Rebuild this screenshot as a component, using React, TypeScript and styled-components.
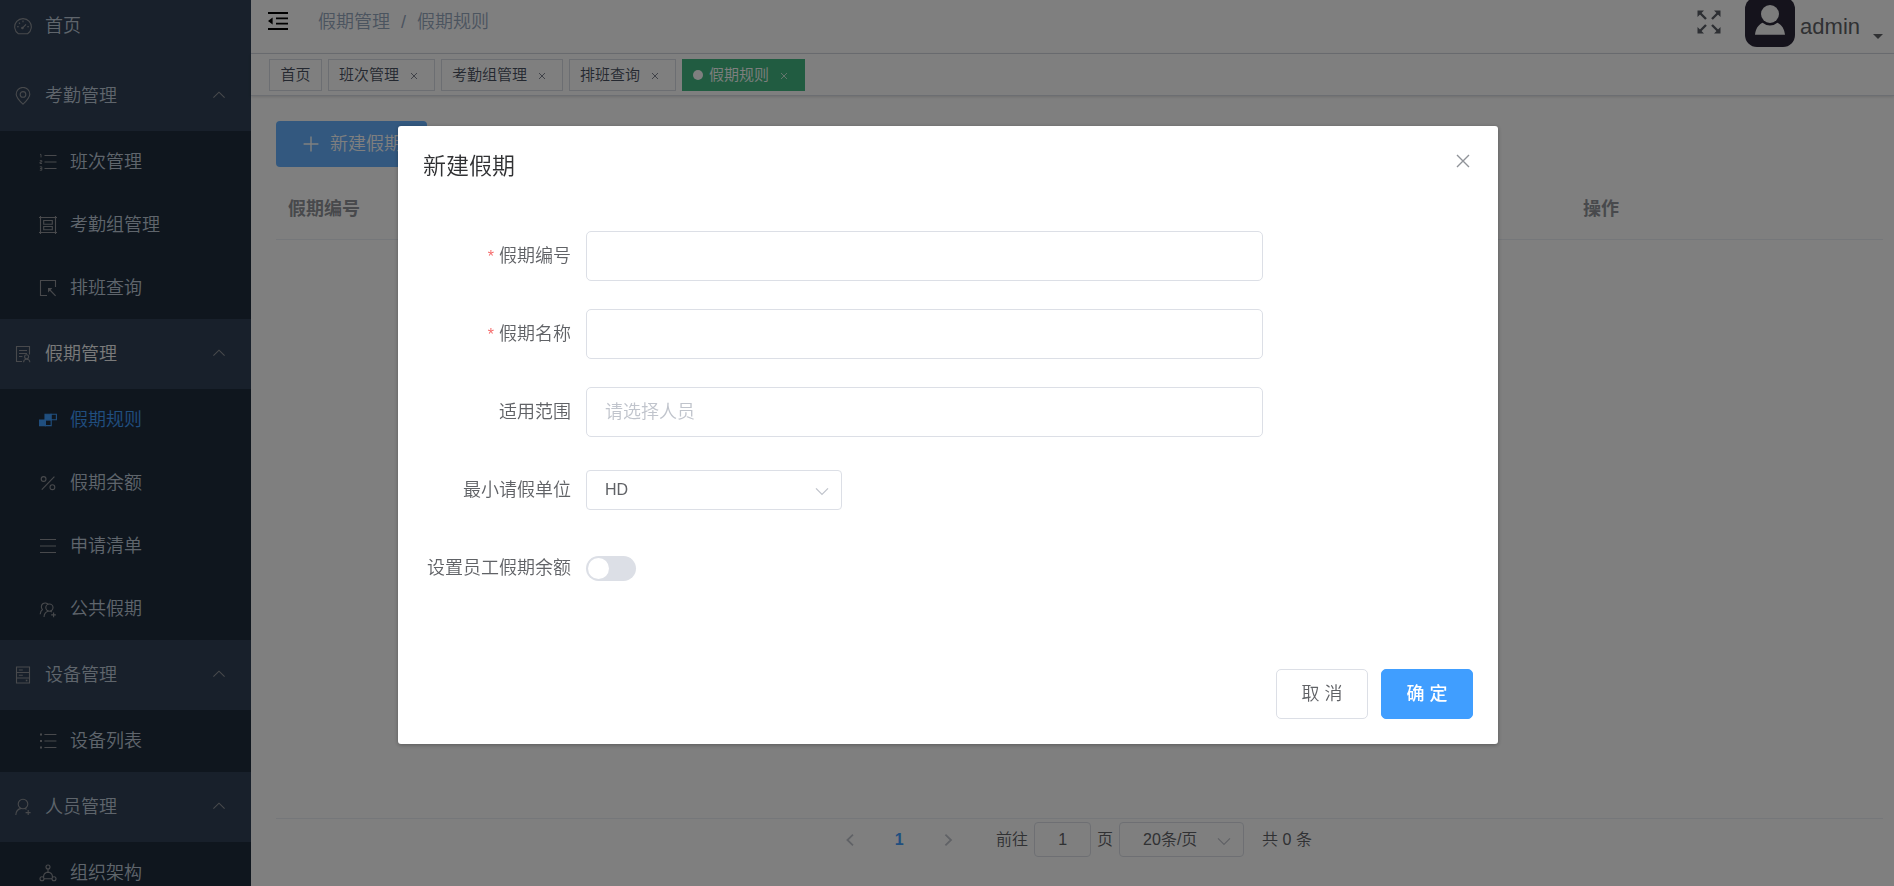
import React, { ReactNode } from 'react';
import styled, { createGlobalStyle } from 'styled-components';

const GlobalStyle = createGlobalStyle`
  *, *::before, *::after { box-sizing: border-box; }
  body {
    margin: 0;
    overflow: hidden;
    background: #fff;
    color: #606266;
    font-family: "Liberation Sans", "Noto Sans CJK SC", sans-serif;
    font-size: 18px;
    font-weight: 350;
    line-height: 20px;
  }
  button, input, select { font-family: inherit; font-weight: inherit; line-height: inherit; color: inherit; }
  ul { margin: 0; padding: 0; list-style: none; }
  a { color: inherit; text-decoration: none; }
`;

/* ---------- icons ---------- */

const Svg = styled.svg<{ $size?: number }>`
  width: ${p => p.$size ?? 18}px;
  height: ${p => p.$size ?? 18}px;
  flex: none;
  display: block;
  fill: none;
  stroke: currentColor;
  stroke-width: 1.1;
`;

const Icon = ({ children, size }: { children: ReactNode; size?: number }) => (
  <Svg viewBox="0 0 18 18" $size={size} aria-hidden="true">{children}</Svg>
);

const icons = {
  dashboard: (
    <Icon>
      <path d="M4.4 16.8A8.3 8.3 0 1 1 13.6 16.8Z" />
      <path d="M8.4 11.2 12 7.4M9 3.6v1.6M3 9.8h1.8M13.2 9.8H15M4.9 5.7l1.1 1.1" />
      <circle cx="8.4" cy="11" r=".7" />
    </Icon>
  ),
  location: (
    <Icon>
      <path d="M9 17.2C5 13.4 2.2 10.4 2.2 7.2a6.8 6.8 0 0 1 13.6 0c0 3.2-2.8 6.2-6.8 10Z" />
      <circle cx="9" cy="7.4" r="2.8" />
    </Icon>
  ),
  ordered: (
    <Icon>
      <path d="M5.5 2.5h12M5.5 9h12M5.5 15.5h12" />
      <path d="M1 1.4h1v3M.8 7.6h2v1.4H1v1.5h2M.8 13.8h2v3.4h-2M1 15.5h1.8" strokeWidth=".9" />
    </Icon>
  ),
  group: (
    <Icon>
      <path d="M1.5 1.5h15v15h-15Z" />
      <path d="M4.7 4.5h8.6v3.8H4.7ZM4.7 10.5h8.6v3.2H4.7Z" />
      <path d="M0 1.5h3M1.5 0v3M15 1.5h3M16.5 0v3M0 16.5h3M1.5 15v3M15 16.5h3M16.5 15v3" />
    </Icon>
  ),
  pointer: (
    <Icon>
      <path d="M8 16.5H1.5v-15h15V8" />
      <path d="M10.5 10.5 16.6 16.8" />
      <path d="M9 9h4.4L9 13.4Z" fill="currentColor" stroke="none" />
    </Icon>
  ),
  document: (
    <Icon>
      <path d="M8 16.5H2.5v-15h13v8" />
      <path d="M5 5.5h8M5 8.5h8M5 11.5h3.4" />
      <circle cx="12.6" cy="11.8" r="2" />
      <path d="M9.6 17.2c0-2 1.2-3 3-3s3.2 1 3.2 3" />
    </Icon>
  ),
  rules: (
    <Icon>
      <path d="M.4 9h6v5.6h-6ZM6 3.2h6v5.6H6Z" fill="currentColor" />
      <path d="M6.4 9h5.8v5.6H6.4ZM12 3.2h5.4v5.6H12Z" />
    </Icon>
  ),
  percent: (
    <Icon>
      <circle cx="4.6" cy="5" r="2.4" />
      <circle cx="13.4" cy="13.2" r="2.4" />
      <path d="M15.4 2.6 2.8 15.6" />
    </Icon>
  ),
  lines: (
    <Icon><path d="M1 2.5h16M1 9h16M1 15.5h16" /></Icon>
  ),
  people: (
    <Icon>
      <path d="M3.2 9.2a3.8 3.8 0 1 1 6-4.8M1.2 14.2c.2-2.2.8-3.8 2.6-5" />
      <circle cx="10.4" cy="7.6" r="3.6" />
      <path d="M5 17c.2-3.4 2-5.4 4.4-5.8M11.4 11.2l1.4.8M14.6 12.6v4.6M12.2 14.9h4.6" />
    </Icon>
  ),
  cabinet: (
    <Icon>
      <path d="M2.5 1h13v16h-13ZM2.5 6.5h13M2.5 12h13M4.8 4h4M4.8 9.2h4" />
      <path d="M11.8 14.5h1.6" strokeWidth="1.6" />
    </Icon>
  ),
  list: (
    <Icon>
      <path d="M5.4 2.5h12M5.4 9h12M5.4 15.5h12" />
      <path d="M1 2.5h2M1 9h2M1 15.5h2" strokeWidth="2" />
    </Icon>
  ),
  person: (
    <Icon>
      <circle cx="9" cy="6" r="4.8" />
      <path d="M1.8 17c.2-3.8 2.4-6 5.4-6.6M10.8 10.4l1.8.9M14.2 12v5M11.6 14.6h5" />
    </Icon>
  ),
  tree: (
    <Icon>
      <circle cx="9" cy="3" r="2" />
      <circle cx="3" cy="14.8" r="2" />
      <circle cx="15" cy="14.8" r="2" />
      <path d="M9 5v3.4M7.4 8.4a4.6 4.6 0 0 0-2.8 4.6M10.6 8.4a4.6 4.6 0 0 1 2.8 4.6M5 14.8h8M7.4 8.4h3.2" />
    </Icon>
  ),
  plus: <Icon><path d="M10 1.6v14.8M2.6 9h14.8" strokeWidth="1.4" /></Icon>,
  up: <Icon><path d="M3.4 10.6 9 5.2l5.6 5.4" /></Icon>,
  down: <Icon><path d="M3 7.4 9 13.4 15 7.4" strokeWidth="1.3" /></Icon>,
  left: <Icon><path d="M12 3.6 6.4 9l5.6 5.4" strokeWidth="1.8" /></Icon>,
  right: <Icon><path d="M6.4 3.6 12 9l-5.6 5.4" strokeWidth="1.8" /></Icon>,
  close: <Icon><path d="M3 3l12 12M15 3 3 15" strokeWidth="1.4" /></Icon>,
};

/* ---------- shell ---------- */

const Shell = styled.div`
  display: flex;
  height: calc(100vh + 9px);
  margin-top: -9px;
`;

const Sidebar = styled.nav`
  width: 251px;
  flex: none;
  overflow: hidden;
  background: #304156;
  color: #bfcbd9;
`;

const GroupButton = styled.button<{ $current?: boolean }>`
  display: flex;
  align-items: center;
  gap: 13px;
  width: 100%;
  height: 70px;
  padding: 0 23px 0 14px;
  border: 0;
  background: none;
  font-size: 18px;
  text-align: left;
  color: ${p => (p.$current ? '#f4f4f5' : '#bfcbd9')};
  svg { color: #909399; }
  span { flex: 1; }
`;

const SubMenu = styled.ul`
  display: flex;
  flex-direction: column;
  gap: 1px;
  background: #1f2d3d;
`;

const SubLink = styled.a<{ $active?: boolean }>`
  display: flex;
  align-items: center;
  gap: 13px;
  height: 62px;
  padding-left: 39px;
  color: ${p => (p.$active ? '#409eff' : '#bfcbd9')};
  svg { color: ${p => (p.$active ? '#409eff' : '#909399')}; }
`;

const Page = styled.div`
  flex: 1;
  min-width: 0;
  display: flex;
  flex-direction: column;
`;

const Navbar = styled.header`
  display: flex;
  align-items: center;
  height: 63px;
  padding: 0 11px 0 17px;
  border-bottom: 1px solid #d8dce5;
`;

const IconButton = styled.button`
  display: flex;
  padding: 0;
  border: 0;
  background: none;
  color: #5a5e66;
`;

const FoldButton = styled(IconButton)`
  margin-right: 30px;
  color: #000;
`;

const Breadcrumb = styled.div`
  display: flex;
  gap: 11px;
  flex: 1;
  color: #97a8be;
`;

const Account = styled.button`
  display: flex;
  align-items: flex-end;
  height: 50px;
  margin-left: 24px;
  padding: 0;
  border: 0;
  background: none;
  font-size: 22px;
  line-height: 40px;
  color: #606266;
`;

const UserName = styled.span`
  margin: 0 13px 0 5px;
`;

const Caret = styled.span`
  margin-bottom: 8px;
  border: 5px solid transparent;
  border-top-color: currentColor;
  border-bottom: 0;
`;

const TagBar = styled.div`
  display: flex;
  gap: 6px;
  height: 42px;
  padding: 5px 18px;
  border-bottom: 1px solid #d8dce5;
  box-shadow: 0 1px 3px rgba(0, 0, 0, 0.12), 0 0 3px rgba(0, 0, 0, 0.04);
`;

const Tag = styled.div<{ $active?: boolean }>`
  display: flex;
  justify-content: center;
  align-items: center;
  min-width: 53px;
  height: 32px;
  padding: 0 10px;
  border: 1px solid ${p => (p.$active ? '#42b983' : '#d8dce5')};
  background: ${p => (p.$active ? '#42b983' : '#fff')};
  color: ${p => (p.$active ? '#fff' : '#495060')};
  font-size: 15px;
`;

const Dot = styled.i`
  width: 10px;
  height: 10px;
  margin-right: 6px;
  border-radius: 50%;
  background: #fff;
`;

const TagClose = styled.button`
  display: flex;
  justify-content: center;
  width: 20px;
  margin-left: 5px;
  padding: 2px 0 0;
  border: 0;
  background: none;
`;

const Content = styled.main`
  flex: 1;
  display: flex;
  flex-direction: column;
  padding: 25px 11px 0 25px;
`;

const CreateButton = styled.button`
  display: flex;
  align-items: center;
  gap: 11px;
  align-self: flex-start;
  height: 46px;
  padding: 0 25px;
  border: 0;
  border-radius: 4px;
  background: #66b1ff;
  color: #fff;
  font-size: 18px;
`;

const TableArea = styled.div`
  flex: 1;
  margin-top: 11px;
  border-bottom: 1px solid #ebeef5;
`;

const Table = styled.table`
  width: 100%;
  border-spacing: 0;
  table-layout: fixed;
  color: #909399;
`;

const HeadCell = styled.th<{ $width?: number }>`
  ${p => (p.$width ? `width: ${p.$width}px;` : '')}
  height: 62px;
  padding: 0 12px;
  border-bottom: 1px solid #ebeef5;
  text-align: left;
  font-weight: 700;
`;

const Pager = styled.div`
  display: flex;
  justify-content: center;
  align-items: center;
  padding: 3px 25px 29px 6px;
  font-size: 16px;
`;

const PageButton = styled.button<{ $current?: boolean }>`
  display: flex;
  justify-content: center;
  align-items: center;
  width: 44px;
  height: 35px;
  margin-right: 5px;
  padding: 0;
  border: 0;
  background: none;
  font-size: 16px;
  font-weight: 700;
  color: ${p => (p.$current ? '#409eff' : '#c0c4cc')};
`;

const JumpLabel = styled.label`
  display: flex;
  align-items: center;
  gap: 6px;
  margin: 0 6px 0 21px;
`;

const JumpInput = styled.input`
  width: 57px;
  height: 35px;
  padding: 0;
  border: 1px solid #dcdfe6;
  border-radius: 4px;
  background: #fff;
  font-size: 16px;
  text-align: center;
`;

/* ---------- form controls ---------- */

const SelectBox = styled.div<{ $width: number }>`
  display: grid;
  align-items: center;
  width: ${p => p.$width}px;
  color: #c0c4cc;
  > * { grid-area: 1 / 1; }
  > svg { justify-self: end; margin-right: 11px; pointer-events: none; }
`;

const Select = styled.select<{ $height: number; $pad: number; $font: number }>`
  appearance: none;
  width: 100%;
  height: ${p => p.$height}px;
  padding: 0 ${p => p.$pad}px;
  border: 1px solid #dcdfe6;
  border-radius: 4px;
  background: #fff;
  color: #606266;
  font-size: ${p => p.$font}px;
`;

const Total = styled.span`
  margin-left: 18px;
`;

const TextInput = styled.input`
  width: 100%;
  height: 50px;
  padding: 0 18px;
  border: 1px solid #dcdfe6;
  border-radius: 5px;
  background: #fff;
  font-size: 18px;
  &::placeholder { color: #c0c4cc; }
`;

const Switch = styled.input`
  appearance: none;
  display: block;
  width: 50px;
  height: 25px;
  margin: 0;
  padding: 2px;
  border-radius: 13px;
  background: #dcdfe6;
  &::before {
    content: '';
    display: block;
    width: 21px;
    height: 21px;
    border-radius: 50%;
    background: #fff;
  }
  &:checked { background: #409eff; }
  &:checked::before { margin-left: auto; }
`;

/* ---------- dialog ---------- */

const Overlay = styled.div`
  position: fixed;
  inset: 0;
  display: flex;
  justify-content: center;
  align-items: flex-start;
  padding: 126px 15px 0 17px;
  overflow: hidden;
  background: rgba(0, 0, 0, 0.5);
`;

const Dialog = styled.section`
  width: 1100px;
  max-width: 100%;
  padding: 25px;
  border-radius: 3px;
  background: #fff;
  box-shadow: 0 1px 4px rgba(0, 0, 0, 0.3);
`;

const DialogHead = styled.header`
  display: flex;
  justify-content: space-between;
  align-items: flex-start;
`;

const DialogTitle = styled.h2`
  margin: 0;
  font-size: 23px;
  line-height: 30px;
  font-weight: inherit;
  color: #303133;
`;

const DialogClose = styled(IconButton)`
  padding: 1px;
  color: #909399;
`;

const Form = styled.form`
  display: flex;
  flex-direction: column;
  gap: 28px;
  padding: 50px 0 76px;
`;

const Field = styled.div`
  display: grid;
  grid-template-columns: 148px minmax(0, 677px);
  column-gap: 15px;
  align-items: center;
  height: 50px;
`;

const FieldLabel = styled.label<{ $required?: boolean }>`
  text-align: right;
  white-space: nowrap;
  ${p => (p.$required ? `&::before { content: '*'; margin-right: 5px; color: #f56c6c; font-size: 16px; }` : '')}
`;

const DialogFoot = styled.footer`
  display: flex;
  justify-content: flex-end;
  gap: 13px;
`;

const DialogButton = styled.button<{ $primary?: boolean }>`
  width: 92px;
  height: 50px;
  padding: 0;
  border: 1px solid ${p => (p.$primary ? '#409eff' : '#dcdfe6')};
  border-radius: 5px;
  background: ${p => (p.$primary ? '#409eff' : '#fff')};
  color: ${p => (p.$primary ? '#fff' : '#606266')};
  font-size: 18px;
  font-weight: ${p => (p.$primary ? 500 : 'inherit')};
`;

/* ---------- data ---------- */

type IconName = keyof typeof icons;
type Group = { title: string; icon: IconName; current?: boolean; items: [string, IconName][] };

const groups: Group[] = [
  { title: '考勤管理', icon: 'location', items: [['班次管理', 'ordered'], ['考勤组管理', 'group'], ['排班查询', 'pointer']] },
  { title: '假期管理', icon: 'document', current: true, items: [['假期规则', 'rules'], ['假期余额', 'percent'], ['申请清单', 'lines'], ['公共假期', 'people']] },
  { title: '设备管理', icon: 'cabinet', items: [['设备列表', 'list']] },
  { title: '人员管理', icon: 'person', items: [['组织架构', 'tree']] },
];

const tags = ['首页', '班次管理', '考勤组管理', '排班查询', '假期规则'];
const activeName = '假期规则';

const SmallClose = () => (
  <Svg viewBox="0 0 8 8" $size={8} aria-hidden="true">
    <path d="M1 1l6 6M7 1 1 7" strokeWidth=".7" />
  </Svg>
);

export default function App() {
  return (
    <>
      <GlobalStyle />
      <Shell>
        <Sidebar>
          <GroupButton as="a" href="#home">{icons.dashboard}<span>首页</span></GroupButton>
          {groups.map(g => (
            <React.Fragment key={g.title}>
              <GroupButton type="button" $current={g.current}>
                {icons[g.icon]}<span>{g.title}</span>{icons.up}
              </GroupButton>
              <SubMenu>
                {g.items.map(([name, icon]) => (
                  <li key={name}>
                    <SubLink href="#menu" $active={name === activeName}>{icons[icon]}{name}</SubLink>
                  </li>
                ))}
              </SubMenu>
            </React.Fragment>
          ))}
        </Sidebar>

        <Page>
          <Navbar>
            <FoldButton type="button" aria-label="折叠菜单">
              <Svg viewBox="0 0 20 20" $size={20} aria-hidden="true">
                <path d="M0 1h20M8 6.3h12M8 11.7h12M0 17h20" strokeWidth="1.8" />
                <path d="M0 9 4.6 5.6v6.8Z" fill="currentColor" stroke="none" />
              </Svg>
            </FoldButton>
            <Breadcrumb><a href="#vacation">假期管理</a><span>/</span><span>假期规则</span></Breadcrumb>
            <IconButton type="button" aria-label="全屏">
              <Svg viewBox="0 0 24 24" $size={24} aria-hidden="true">
                <path d="M3 3l6 6M21 3l-6 6M3 21l6-6M21 21l-6-6" strokeWidth="2.4" />
                <path d="M.5.5H7L.5 7ZM23.5.5V7L17 .5ZM.5 23.5V17L7 23.5ZM23.5 23.5H17l6.5-6.5Z" fill="currentColor" stroke="none" />
              </Svg>
            </IconButton>
            <Account type="button">
              <Svg viewBox="0 0 50 50" $size={50} aria-hidden="true">
                <rect width="50" height="50" rx="12" fill="#2a2638" stroke="none" />
                <circle cx="25" cy="17" r="9" fill="#f8f8f8" stroke="none" />
                <path d="M17.6 25.8a11.4 11.4 0 0 0 14.8 0c4.4 2 7 6.2 7.6 12H10c.6-5.8 3.2-10 7.6-12Z" fill="#f8f8f8" stroke="none" />
              </Svg>
              <UserName>admin</UserName>
              <Caret />
            </Account>
          </Navbar>

          <TagBar>
            {tags.map((name, i) => (
              <Tag key={name} $active={name === activeName}>
                {name === activeName && <Dot />}
                <a href="#tag">{name}</a>
                {i > 0 && <TagClose type="button" aria-label="关闭"><SmallClose /></TagClose>}
              </Tag>
            ))}
          </TagBar>

          <Content>
            <CreateButton type="button">{icons.plus}新建假期</CreateButton>
            <TableArea>
              <Table>
                <thead>
                  <tr><HeadCell>假期编号</HeadCell><HeadCell $width={312}>操作</HeadCell></tr>
                </thead>
              </Table>
            </TableArea>
            <Pager>
              <PageButton type="button" aria-label="上一页">{icons.left}</PageButton>
              <PageButton type="button" $current>1</PageButton>
              <PageButton type="button" aria-label="下一页">{icons.right}</PageButton>
              <JumpLabel>前往<JumpInput defaultValue="1" />页</JumpLabel>
              <SelectBox $width={125}>
                <Select $height={35} $pad={23} $font={16} aria-label="每页条数"><option>20条/页</option></Select>
                {icons.down}
              </SelectBox>
              <Total>共 0 条</Total>
            </Pager>
          </Content>
        </Page>
      </Shell>

      <Overlay>
        <Dialog role="dialog" aria-modal="true" aria-labelledby="dialog-title">
          <DialogHead>
            <DialogTitle id="dialog-title">新建假期</DialogTitle>
            <DialogClose type="button" aria-label="关闭">{icons.close}</DialogClose>
          </DialogHead>
          <Form>
            <Field>
              <FieldLabel htmlFor="code" $required>假期编号</FieldLabel>
              <TextInput id="code" />
            </Field>
            <Field>
              <FieldLabel htmlFor="name" $required>假期名称</FieldLabel>
              <TextInput id="name" />
            </Field>
            <Field>
              <FieldLabel htmlFor="scope">适用范围</FieldLabel>
              <TextInput id="scope" placeholder="请选择人员" />
            </Field>
            <Field>
              <FieldLabel htmlFor="unit">最小请假单位</FieldLabel>
              <SelectBox $width={256}>
                <Select id="unit" $height={40} $pad={18} $font={16}><option>HD</option></Select>
                {icons.down}
              </SelectBox>
            </Field>
            <Field>
              <FieldLabel htmlFor="balance">设置员工假期余额</FieldLabel>
              <Switch id="balance" type="checkbox" />
            </Field>
          </Form>
          <DialogFoot>
            <DialogButton type="button">取 消</DialogButton>
            <DialogButton type="button" $primary>确 定</DialogButton>
          </DialogFoot>
        </Dialog>
      </Overlay>
    </>
  );
}
